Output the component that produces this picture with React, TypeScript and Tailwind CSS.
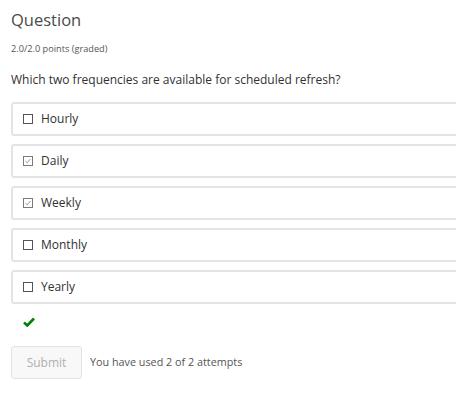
const options = [
  { label: "Hourly", checked: false },
  { label: "Daily", checked: true },
  { label: "Weekly", checked: true },
  { label: "Monthly", checked: false },
  { label: "Yearly", checked: false },
];

const Box = ({ checked }: { checked: boolean }) => (
  <svg width="10" height="10" viewBox="0 0 10 10" className="shrink-0">
    <rect x="0.5" y="0.5" width="9" height="9" fill="white" stroke={checked ? "#7a7a7a" : "#555"} strokeWidth="1" />
    {checked && <path d="M2.5 5.2 L4.2 6.8 L7.5 3" fill="none" stroke="#8a9ab0" strokeWidth="1" />}
  </svg>
);

export default function App() {
  return (
    <div className="w-[456px] h-[410px] overflow-hidden bg-white pl-[11px] text-[#313131]" style={{ fontFamily: "'Open Sans', sans-serif" }}>
      <h2 className="pt-[8px] text-[16.5px] leading-[24px] text-[#4a4a4a]">Question</h2>
      <div className="mt-[10px] text-[9.2px] leading-[14px] text-[#555]">2.0/2.0 points (graded)</div>
      <p className="mt-[15px] text-[12px] leading-[17px] text-[#313131]">Which two frequencies are available for scheduled refresh?</p>
      <div className="mt-[14px] flex w-[460px] flex-col gap-[8px]">
        {options.map((o) => (
          <div key={o.label} className="flex h-[34px] items-center gap-[8px] rounded-[3px] border-2 border-[#e4e4e4] pl-[10px] text-[12px]">
            <Box checked={o.checked} />
            <span>{o.label}</span>
          </div>
        ))}
      </div>
      <div className="mt-[13px] pl-[12px]">
        <svg width="12" height="10" viewBox="0 0 12 10">
          <path d="M1 5.5 L4.3 8.5 L11 1.5" fill="none" stroke="#008100" strokeWidth="2.6" />
        </svg>
      </div>
      <div className="mt-[19px] flex items-center gap-[8px]">
        <button className="h-[33px] w-[71px] rounded-[3px] border border-[#e2e2e2] bg-[#f8f8f8] text-[12px] text-[#b0b0b0]">Submit</button>
        <span className="text-[10.8px] text-[#555]">You have used 2 of 2 attempts</span>
      </div>
    </div>
  );
}
